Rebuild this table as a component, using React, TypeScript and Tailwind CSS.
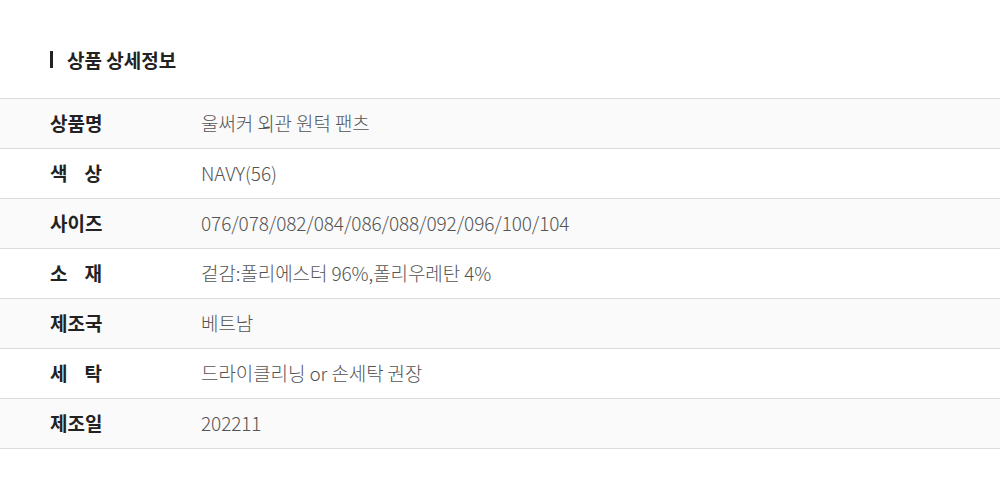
import React from "react";

const rows: { label: string; value: string; spaced?: boolean }[] = [
  { label: "상품명", value: "울써커 외관 원턱 팬츠" },
  { label: "색상", value: "NAVY(56)", spaced: true },
  { label: "사이즈", value: "076/078/082/084/086/088/092/096/100/104" },
  { label: "소재", value: "겉감:폴리에스터 96%,폴리우레탄 4%", spaced: true },
  { label: "제조국", value: "베트남" },
  { label: "세탁", value: "드라이클리닝 or 손세탁 권장", spaced: true },
  { label: "제조일", value: "202211" },
];

export default function App() {
  return (
    <div
      className="w-[1000px] h-[498px] bg-white"
      style={{ fontFamily: '"Noto Sans CJK KR", "Noto Sans", sans-serif' }}
    >
      <div className="pl-[50px] flex items-center h-[98px] pb-[16px] pt-[36px]">
        <div className="w-[3px] h-[17px] bg-[#222]" />
        <div className="ml-[14px] text-[19px] font-bold text-[#222] leading-none">상품 상세정보</div>
      </div>
      <div className="border-t border-[#dcdcdc]">
        {rows.map((r, i) => (
          <div
            key={r.label}
            className={`flex items-center h-[50px] border-b border-[#dcdcdc] ${i % 2 === 0 ? "bg-[#fafafa]" : "bg-white"}`}
          >
            <div className="w-[201px] shrink-0 pl-[50px] text-[19px] font-bold text-[#222]">
              {r.spaced ? (
                <span className="flex w-[52px] justify-between">
                  <span>{r.label[0]}</span>
                  <span>{r.label[1]}</span>
                </span>
              ) : (
                r.label
              )}
            </div>
            <div className="text-[19px] font-light text-[#555] tracking-[-0.1px]">{r.value}</div>
          </div>
        ))}
      </div>
    </div>
  );
}
